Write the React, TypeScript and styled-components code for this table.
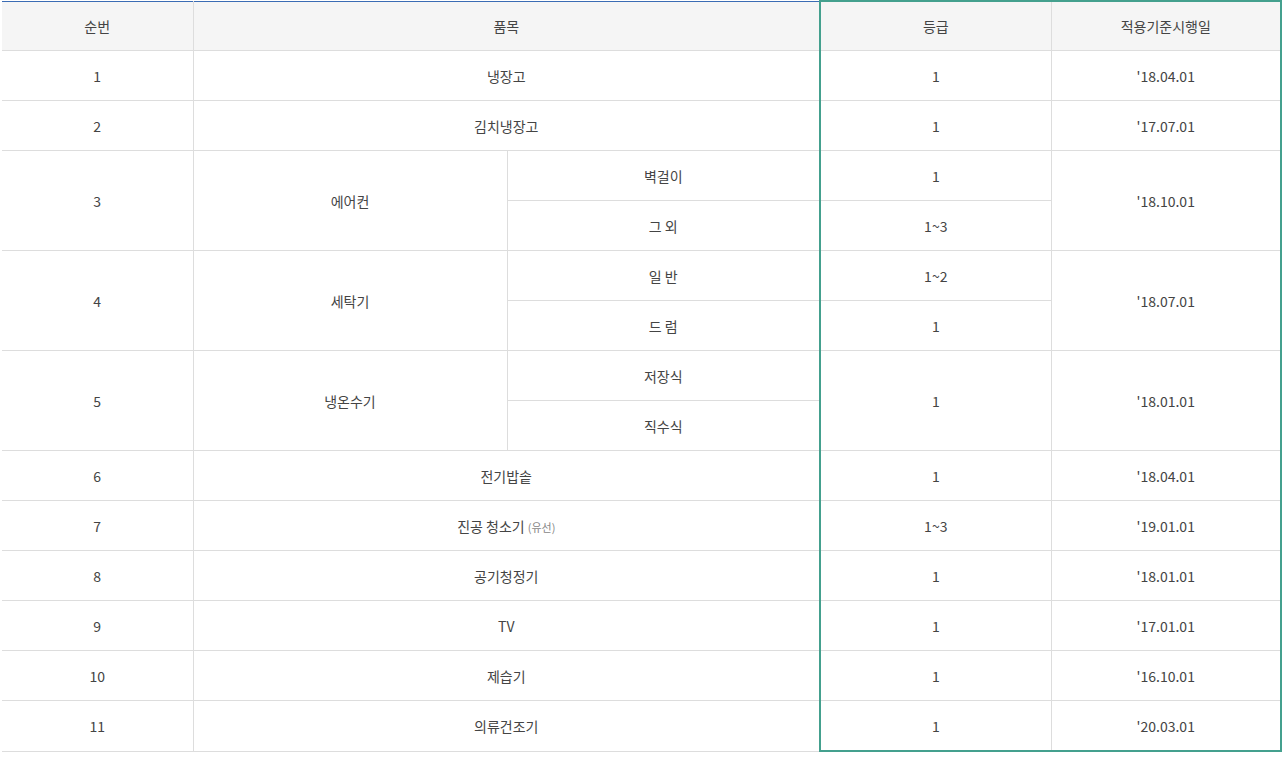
import React from "react";
import styled, { createGlobalStyle } from "styled-components";

const Global = createGlobalStyle`
  html, body { margin: 0; padding: 0; background: #fff; }
  body { font-family: "Noto Sans CJK KR", "Noto Sans", sans-serif; }
`;

const GREEN = "#44a08e";
const LINE = "#dddddd";

const Table = styled.table`
  margin: 0 0 0 2px;
  width: 1279px;
  border-collapse: collapse;
  table-layout: fixed;
  border-top: 1px solid #3b6cb4;
  font-size: 14px;
  color: #444;
`;

const Col = styled.col<{ $w: number }>`
  width: ${(p) => p.$w}px;
`;

type CellProps = { $hl?: "left" | "right"; $top?: boolean; $bottom?: boolean };

const Th = styled.th<CellProps>`
  height: 48px;
  padding: 0;
  background: #f5f5f5;
  font-weight: 400;
  text-align: center;
  vertical-align: middle;
  border: 1px solid ${LINE};
  border-top: ${(p) => (p.$top ? `2px solid ${GREEN}` : "1px solid #3b6cb4")};
  ${(p) => (p.$hl === "left" ? `border-left: 2px solid ${GREEN};` : "")}
  ${(p) => (p.$hl === "right" ? `border-right: 2px solid ${GREEN};` : "")}
  &:first-child { border-left: none; }
`;

const Td = styled.td<CellProps>`
  height: 49px;
  padding: 0;
  text-align: center;
  vertical-align: middle;
  border: 1px solid ${LINE};
  ${(p) => (p.$hl === "left" ? `border-left: 2px solid ${GREEN};` : "")}
  ${(p) => (p.$hl === "right" ? `border-right: 2px solid ${GREEN};` : "")}
  ${(p) => (p.$bottom ? `border-bottom: 2px solid ${GREEN};` : "")}
  &:first-child { border-left: none; }
`;

const Note = styled.span`
  font-size: 11px;
  color: #888;
  margin-left: 3px;
`;

type Row = { no: string; name: React.ReactNode; grade: string; date: string };

const simpleRows: Row[] = [
  { no: "6", name: "전기밥솥", grade: "1", date: "'18.04.01" },
  { no: "7", name: <>진공 청소기<Note>(유선)</Note></>, grade: "1~3", date: "'19.01.01" },
  { no: "8", name: "공기청정기", grade: "1", date: "'18.01.01" },
  { no: "9", name: "TV", grade: "1", date: "'17.01.01" },
  { no: "10", name: "제습기", grade: "1", date: "'16.10.01" },
  { no: "11", name: "의류건조기", grade: "1", date: "'20.03.01" },
];

export default function App() {
  return (
    <>
      <Global />
      <Table>
        <colgroup>
          <Col $w={191} />
          <Col $w={314} />
          <Col $w={313} />
          <Col $w={231} />
          <Col $w={230} />
        </colgroup>
        <thead>
          <tr>
            <Th>순번</Th>
            <Th colSpan={2}>품목</Th>
            <Th $hl="left" $top>등급</Th>
            <Th $hl="right" $top>적용기준시행일</Th>
          </tr>
        </thead>
        <tbody>
          <tr>
            <Td>1</Td>
            <Td colSpan={2}>냉장고</Td>
            <Td $hl="left">1</Td>
            <Td $hl="right">'18.04.01</Td>
          </tr>
          <tr>
            <Td>2</Td>
            <Td colSpan={2}>김치냉장고</Td>
            <Td $hl="left">1</Td>
            <Td $hl="right">'17.07.01</Td>
          </tr>
          <tr>
            <Td rowSpan={2}>3</Td>
            <Td rowSpan={2}>에어컨</Td>
            <Td>벽걸이</Td>
            <Td $hl="left">1</Td>
            <Td rowSpan={2} $hl="right">'18.10.01</Td>
          </tr>
          <tr>
            <Td>그 외</Td>
            <Td $hl="left">1~3</Td>
          </tr>
          <tr>
            <Td rowSpan={2}>4</Td>
            <Td rowSpan={2}>세탁기</Td>
            <Td>일 반</Td>
            <Td $hl="left">1~2</Td>
            <Td rowSpan={2} $hl="right">'18.07.01</Td>
          </tr>
          <tr>
            <Td>드 럼</Td>
            <Td $hl="left">1</Td>
          </tr>
          <tr>
            <Td rowSpan={2}>5</Td>
            <Td rowSpan={2}>냉온수기</Td>
            <Td>저장식</Td>
            <Td rowSpan={2} $hl="left">1</Td>
            <Td rowSpan={2} $hl="right">'18.01.01</Td>
          </tr>
          <tr>
            <Td>직수식</Td>
          </tr>
          {simpleRows.map((r, i) => {
            const last = i === simpleRows.length - 1;
            return (
              <tr key={r.no}>
                <Td>{r.no}</Td>
                <Td colSpan={2}>{r.name}</Td>
                <Td $hl="left" $bottom={last}>{r.grade}</Td>
                <Td $hl="right" $bottom={last}>{r.date}</Td>
              </tr>
            );
          })}
        </tbody>
      </Table>
    </>
  );
}
